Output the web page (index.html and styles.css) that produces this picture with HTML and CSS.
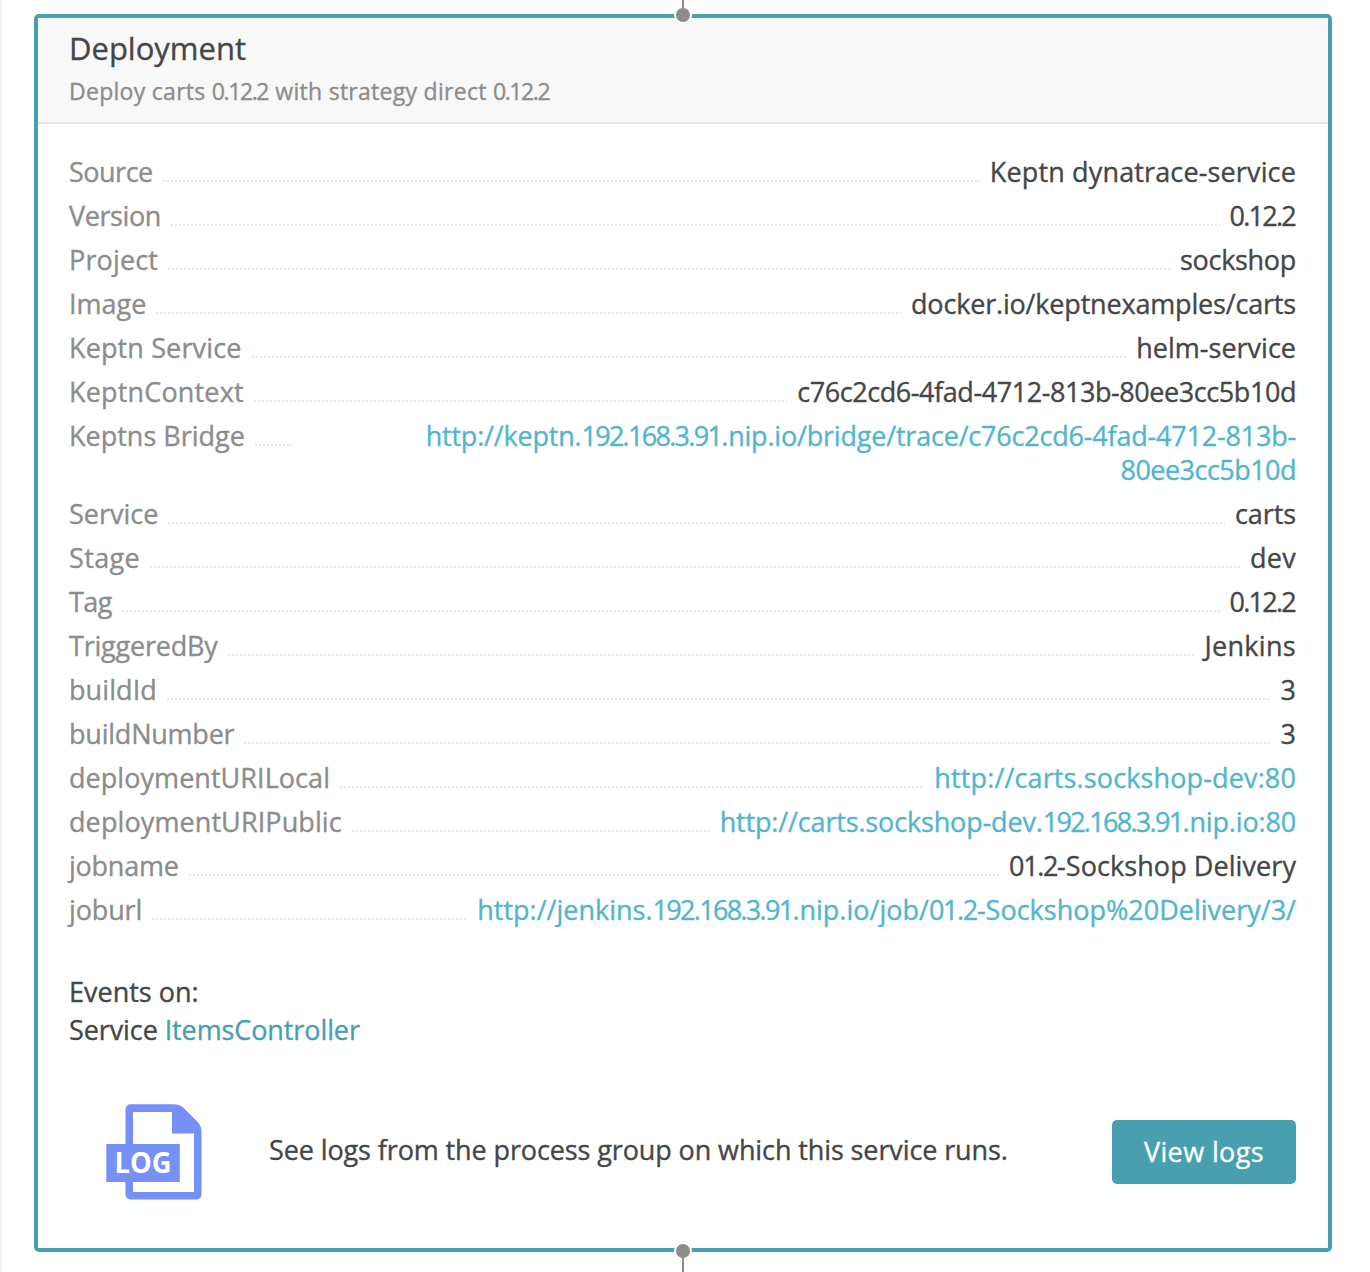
FILE: index.html
```
<!DOCTYPE html>
<html lang="en">
<head>
<meta charset="utf-8">
<title>Deployment</title>
<link rel="stylesheet" href="styles.css">
</head>
<body>
<main class="timeline">
<section class="card">
  <span class="node node-top"></span>
  <span class="node node-bottom"></span>
  <header class="card-header">
    <h1>Deployment</h1>
    <p>Deploy carts <span class="num">0.12.2</span> with strategy direct <span class="num">0.12.2</span></p>
  </header>
  <div class="card-body">
    <dl class="props">
      <div class="row"><dt style="letter-spacing:-.5px">Source</dt><i class="dots"></i><dd style="letter-spacing:.14px">Keptn dynatrace-service</dd></div>
      <div class="row"><dt style="letter-spacing:-.4px">Version</dt><i class="dots"></i><dd class="version">0.12.2</dd></div>
      <div class="row"><dt style="letter-spacing:.14px">Project</dt><i class="dots"></i><dd style="letter-spacing:-.3px">sockshop</dd></div>
      <div class="row"><dt style="letter-spacing:0">Image</dt><i class="dots"></i><dd style="letter-spacing:-.18px">docker.io/keptnexamples/carts</dd></div>
      <div class="row"><dt style="letter-spacing:.13px">Keptn Service</dt><i class="dots"></i><dd style="letter-spacing:0">helm-service</dd></div>
      <div class="row"><dt style="letter-spacing:.17px">KeptnContext</dt><i class="dots"></i><dd style="letter-spacing:-.43px">c76c2cd6-4fad-4712-813b-80ee3cc5b10d</dd></div>
      <div class="row"><dt>Keptns Bridge</dt><i class="dots"></i><dd class="wide"><a style="letter-spacing:-.2px">http://keptn.<span class="ip">192.168.3.91</span>.nip.io/bridge/trace/c76c2cd6-4fad-4712-813b-<br><span class="hash">80ee3cc5b10d</span></a></dd></div>
      <div class="row"><dt style="letter-spacing:0">Service</dt><i class="dots"></i><dd style="letter-spacing:-.1px">carts</dd></div>
      <div class="row"><dt style="letter-spacing:.35px">Stage</dt><i class="dots"></i><dd style="letter-spacing:.3px">dev</dd></div>
      <div class="row"><dt style="letter-spacing:-.5px">Tag</dt><i class="dots"></i><dd class="version">0.12.2</dd></div>
      <div class="row"><dt style="letter-spacing:-.2px">TriggeredBy</dt><i class="dots"></i><dd style="letter-spacing:.3px">Jenkins</dd></div>
      <div class="row"><dt style="letter-spacing:.1px">buildId</dt><i class="dots"></i><dd class="digit">3</dd></div>
      <div class="row"><dt style="letter-spacing:-.22px">buildNumber</dt><i class="dots"></i><dd class="digit">3</dd></div>
      <div class="row"><dt style="letter-spacing:.05px">deploymentURILocal</dt><i class="dots"></i><dd><a style="letter-spacing:.13px">http://carts.sockshop-dev:80</a></dd></div>
      <div class="row"><dt style="letter-spacing:.1px">deploymentURIPublic</dt><i class="dots"></i><dd><a style="letter-spacing:-.16px">http://carts.sockshop-dev.<span class="ip">192.168.3.91</span>.nip.io:80</a></dd></div>
      <div class="row"><dt style="letter-spacing:-.25px">jobname</dt><i class="dots"></i><dd style="letter-spacing:.07px"><span class="num">01.2</span>-Sockshop Delivery</dd></div>
      <div class="row"><dt style="letter-spacing:-.15px">joburl</dt><i class="dots"></i><dd><a>http://jenkins.<span class="ip">192.168.3.91</span>.nip.io/job/<span class="num">01.2</span>-Sockshop%20Delivery/3/</a></dd></div>
    </dl>
    <div class="events">
      <div>Events on:</div>
      <div class="entity">Service <a>ItemsController</a></div>
    </div>
    <div class="logs">
      <svg class="log-icon" width="96" height="96" viewBox="0 0 96 96">
        <path fill="#7790f8" fill-rule="evenodd" d="M25 .3h42c5 0 8 1 11 4l13 13c3 3 4.500 6 4.500 10V90.500a5 5 0 0 1-5 5H24.500a5 5 0 0 1-5-5V5.300a5 5 0 0 1 5-5zM27 8V88h61V29.500H66V8z"/>
        <rect x=".3" y="40" width="73.500" height="38" fill="#7790f8"/>
        <text x="8.500" y="69" textLength="57" lengthAdjust="spacingAndGlyphs" class="log-label">LOG</text>
      </svg>
      <p>See logs from the process group on which this service runs.</p>
      <button type="button">View logs</button>
    </div>
  </div>
</section>
</main>
</body>
</html>
```
FILE: styles.css
```
* { box-sizing: border-box; margin: 0; padding: 0; }
body {
  height: 1272px;
  overflow: hidden;
  background: #fff;
  border-left: 2px solid #f2f2f2;
  font: 27px/34px "Open Sans", "Noto Sans", sans-serif;
  color: #454646;
  -webkit-text-stroke: .35px currentColor;
}
.timeline { padding: 14px 38px 20px 32px; }
.card {
  position: relative;
  height: 1238px;
  border: 4px solid #479fb0;
  border-radius: 5px;
}
.node {
  position: absolute;
  left: 636px;
  width: 18px;
  height: 18px;
  border: 2px solid #fff;
  border-radius: 50%;
  background: #8c8c8c;
}
.node::after {
  content: "";
  position: absolute;
  left: 6px;
  width: 2px;
  height: 15px;
  background: #8c8c8c;
}
.node-top { top: -12px; }
.node-top::after { bottom: 13px; }
.node-bottom { bottom: -12px; }
.node-bottom::after { top: 13px; }
.card-header {
  height: 106px;
  padding: 8px 32px 0 31px;
  background: #f8f8f8;
  border-bottom: 2px solid #e6e6e6;
}
h1 { font-size: 31px; line-height: 44px; font-weight: 400; letter-spacing: 0; }
.card-header p {
  padding-top: 4px;
  font-size: 23px;
  line-height: 34px;
  letter-spacing: .28px;
  color: #8c8c8c;
}
.num { letter-spacing: -1.35px; }
.card-header .num { margin-right: 1px; letter-spacing: -1.4px; }
.version { padding-right: 1px; letter-spacing: -1.75px; }
.digit { letter-spacing: -1px; padding-right: 1px; }
.ip { letter-spacing: -1.7px; }
.hash { letter-spacing: -.53px; }
.card-body { padding: 31px 32px 0 31px; }
.props { display: flex; flex-direction: column; gap: 10px; }
.row { display: flex; align-items: flex-start; white-space: nowrap; }
dt { color: #8c8c8c; }
dd { text-align: right; }
.wide { width: 994px; }
.dots {
  flex: 1;
  height: 2px;
  margin: 25px 10px 0 10px;
  background: repeating-linear-gradient(90deg, #e6e6e6 0 2px, transparent 2px 4px);
}
.props a { color: #52b5cc; }
.events { margin-top: 46px; line-height: 38px; }
.entity { letter-spacing: -.1px; }
.entity a { color: #479fb0; }
.logs { display: flex; align-items: center; margin-top: 55px; }
.log-icon { flex: none; margin-left: 37px; }
.log-label {
  fill: #fff;
  font-family: "Open Sans", sans-serif;
  font-size: 28px;
  font-weight: 700;
  -webkit-text-stroke: 0;
}
.logs p { flex: 1; padding: 0 0 4px 67px; letter-spacing: -.11px; white-space: nowrap; }
button {
  width: 184px;
  height: 64px;
  border: 0;
  border-radius: 5px;
  background: #479fb0;
  color: #fff;
  font: inherit;
  letter-spacing: .4px;
}
```
